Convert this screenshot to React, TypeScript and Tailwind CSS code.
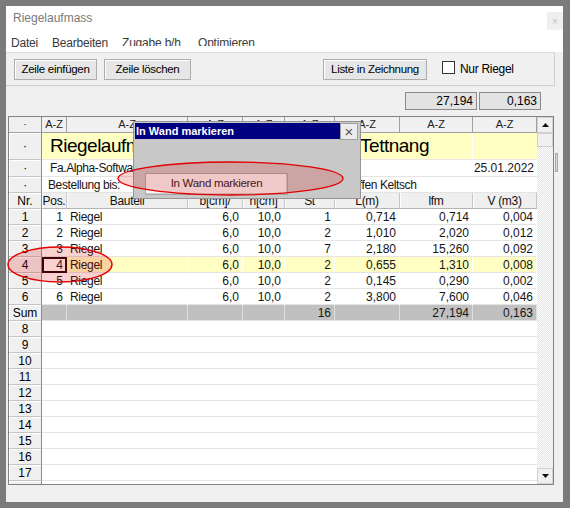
import React from "react";

type Row = {n: string; pos: string; bt: string; b: string; h: string; st: string; l: string; lfm: string; v: string};

const rows: Row[] = [
    {n: "1", pos: "1", bt: "Riegel", b: "6,0", h: "10,0", st: "1", l: "0,714", lfm: "0,714", v: "0,004"},
    {n: "2", pos: "2", bt: "Riegel", b: "6,0", h: "10,0", st: "2", l: "1,010", lfm: "2,020", v: "0,012"},
    {n: "3", pos: "3", bt: "Riegel", b: "6,0", h: "10,0", st: "7", l: "2,180", lfm: "15,260", v: "0,092"},
    {n: "4", pos: "4", bt: "Riegel", b: "6,0", h: "10,0", st: "2", l: "0,655", lfm: "1,310", v: "0,008"},
    {n: "5", pos: "5", bt: "Riegel", b: "6,0", h: "10,0", st: "2", l: "0,145", lfm: "0,290", v: "0,002"},
    {n: "6", pos: "6", bt: "Riegel", b: "6,0", h: "10,0", st: "2", l: "3,800", lfm: "7,600", v: "0,046"}
];

// the last one is only a sliver at the grid bottom, so it has no label
const emptyRows = ["8", "9", "10", "11", "12", "13", "14", "15", "16", "17", ""];

function RowHead({children}: {children?: React.ReactNode}) {
    return (
        <div className="w-[33px] shrink-0 h-full flex items-center justify-center bg-[#f0f0f0] border-r border-r-[#8a8a8a] border-b border-b-[#c4c4c4] shadow-[inset_1px_1px_0_#fff] text-[12px] text-black">
            {children}
        </div>
    );
}

function AzCell({className, children}: {className: string; children?: React.ReactNode}) {
    return (
        <div className={`${className} shrink-0 h-full flex items-center justify-center bg-[#f0f0f0] border-r border-r-[#a0a0a0] border-b border-b-[#a0a0a0] text-[11px] text-[#222]`}>
            {children}
        </div>
    );
}

function HeadCell({className, children}: {className: string; children?: React.ReactNode}) {
    return (
        <div className={`${className} shrink-0 h-full flex items-center justify-center bg-[#efefef] border-r border-r-[#c6c6c6] border-b border-b-[#b4b4b4] shadow-[inset_1px_0_0_#fff] text-[12px] tracking-[-0.3px] text-[#111]`}>
            {children}
        </div>
    );
}

function DataRow({r, sel}: {r: Row; sel?: boolean}) {
    const bg = sel ? "bg-[#ffffc4]" : "bg-white";
    const c = `shrink-0 h-full flex items-center justify-end pr-[3px] border-r border-r-white border-b border-b-[#e4e4e4] ${bg}`;
    return (
        <div className="flex h-[16px] text-[12px] text-[#151515]">
            <RowHead>{r.n}</RowHead>
            {sel ? (
                <div className="w-[25px] shrink-0 h-full flex items-center justify-end pr-[2px] bg-white border-2 border-[#1e0505]">
                    {r.pos}
                </div>
            ) : (
                <div className={`w-[25px] ${c}`}>{r.pos}</div>
            )}
            <div className={`w-[121px] ${c} !justify-start pl-[3px] tracking-[-0.3px]`}>{r.bt}</div>
            <div className={`w-[55px] ${c}`}>{r.b}</div>
            <div className={`w-[42px] ${c}`}>{r.h}</div>
            <div className={`w-[50px] ${c}`}>{r.st}</div>
            <div className={`w-[65px] ${c}`}>{r.l}</div>
            <div className={`w-[73px] ${c}`}>{r.lfm}</div>
            <div className={`w-[64px] ${c}`}>{r.v}</div>
        </div>
    );
}

function Arrow({down}: {down?: boolean}) {
    return (
        <div className="h-[16px] shrink-0 flex items-center justify-center bg-[#f0f0f0] border border-[#d2d2d2]">
            <svg width="7" height="4" viewBox="0 0 7 4" aria-hidden="true">
                <path d={down ? "M0 0H7L3.5 4Z" : "M0 4H7L3.5 0Z"} fill="#111" />
            </svg>
        </div>
    );
}

export default function App() {
    const sumCell = "shrink-0 h-full flex items-center justify-end pr-[3px] bg-[#c0c0c0] border-r border-r-[#dedede] border-b border-b-[#e4e4e4]";
    return (
        <div className="relative w-[570px] h-[508px] bg-[#7b7b7b] p-[6px] pr-[7px] overflow-hidden font-['Liberation_Sans',Arial,sans-serif]">
            <div className="w-[557px] h-[496px] bg-[#f0f0f0] flex flex-col">
                {/* title bar */}
                <div className="h-[24px] shrink-0 bg-white flex justify-between">
                    <div className="pl-[7px] pt-[5px] leading-[14px] text-[12px] text-[#7a7a7a]">Riegelaufmass</div>
                    <div className="mt-[6px] w-[16px] h-[18px] bg-[#efefef] flex items-center justify-center text-[10px] text-[#c4c4c4]">×</div>
                </div>

                {/* menu */}
                <div className="h-[22px] shrink-0 bg-white flex pl-[5px] pt-[6px] leading-[14px] text-[12px] tracking-[-0.2px] text-[#3a3a3a]">
                    <span className="w-[41px]">Datei</span>
                    <span className="w-[70px]">Bearbeiten</span>
                    <span className="w-[76px] h-[10px] overflow-hidden">Zugabe b/h</span>
                    <span className="h-[10px] overflow-hidden">Optimieren</span>
                </div>

                {/* toolbar */}
                <div className="w-[549px] h-[34px] shrink-0 border-t border-t-[#dadada] border-b border-b-[#cfcfcf] border-r border-r-[#cfcfcf] flex items-start pt-[6px] pl-[8px] text-[11.5px] tracking-[-0.3px] text-black">
                    <button className="w-[83px] h-[21px] bg-[#e6e6e6] border border-[#adadad] shadow-[inset_1px_1px_0_#fff]">Zeile einfügen</button>
                    <button className="ml-[7px] w-[87px] h-[21px] bg-[#e6e6e6] border border-[#adadad] shadow-[inset_1px_1px_0_#fff]">Zeile löschen</button>
                    <button className="ml-[132px] w-[104px] h-[21px] bg-[#e6e6e6] border border-[#adadad] shadow-[inset_1px_1px_0_#fff]">Liste in  Zeichnung</button>
                    <div className="ml-[15px] mt-[2px] w-[13px] h-[13px] bg-white border border-[#333]" />
                    <span className="ml-[5px] mt-[1px] text-[12px]">Nur Riegel</span>
                </div>

                {/* totals */}
                <div className="mt-[6px] h-[18px] shrink-0 flex justify-end gap-[2px] pr-[22px] text-[12px] text-black">
                    <div className="w-[72px] h-full flex items-center justify-end pr-[3px] bg-[#e3e3e3] border border-[#8a8a8a]">27,194</div>
                    <div className="w-[62px] h-full flex items-center justify-end pr-[3px] bg-[#e3e3e3] border border-[#8a8a8a]">0,163</div>
                </div>

                {/* grid */}
                <div className="mt-[6px] ml-[2px] flex items-start">
                    <div className="w-[546px] h-[369px] shrink-0 flex bg-white border border-[#828282] overflow-hidden">
                        <div className="w-[528px] shrink-0 flex flex-col">
                            <div className="flex h-[16px] shrink-0">
                                <AzCell className="w-[33px] !border-r-[#8a8a8a]">·</AzCell>
                                <AzCell className="w-[25px]">A-Z</AzCell>
                                <AzCell className="w-[121px]">A-Z</AzCell>
                                <AzCell className="w-[55px]">A-Z</AzCell>
                                <AzCell className="w-[42px]">A-Z</AzCell>
                                <AzCell className="w-[50px]">A-Z</AzCell>
                                <AzCell className="w-[65px]">A-Z</AzCell>
                                <AzCell className="w-[73px]">A-Z</AzCell>
                                <AzCell className="w-[64px]">A-Z</AzCell>
                            </div>

                            <div className="flex h-[27px] shrink-0">
                                <RowHead>·</RowHead>
                                <div className="w-[431px] shrink-0 h-full flex items-center pl-[8px] pr-[43px] bg-[#ffffc4] border-r border-r-white border-b border-b-[#e8e8e8] text-[19px] tracking-[-0.5px] text-black">
                                    <span>Riegelaufmass</span>
                                    <span className="ml-auto">Tettnang</span>
                                </div>
                                <div className="w-[64px] shrink-0 h-full bg-[#ffffc4] border-b border-b-[#e8e8e8]" />
                            </div>

                            <div className="flex h-[17px] shrink-0 text-[12px] tracking-[-0.4px] text-[#151515]">
                                <RowHead>·</RowHead>
                                <div className="w-[431px] shrink-0 h-full flex items-center pl-[8px] bg-white border-b border-b-[#e4e4e4]">Fa.Alpha-Software GmbH</div>
                                <div className="w-[64px] shrink-0 h-full flex items-center justify-end pr-[3px] bg-white border-b border-b-[#e4e4e4] tracking-normal">25.01.2022</div>
                            </div>

                            <div className="flex h-[16px] shrink-0 text-[12px] tracking-[-0.4px] text-[#151515]">
                                <RowHead>·</RowHead>
                                <div className="w-[293px] shrink-0 h-full flex items-center pl-[6px] bg-white border-b border-b-[#e4e4e4]">Bestellung bis:</div>
                                <div className="w-[202px] shrink-0 h-full flex items-center pl-[7px] bg-white border-b border-b-[#e4e4e4]">Steffen Keltsch</div>
                            </div>

                            <div className="flex h-[16px] shrink-0">
                                <RowHead>Nr.</RowHead>
                                <HeadCell className="w-[25px]">Pos.</HeadCell>
                                <HeadCell className="w-[121px]">Bauteil</HeadCell>
                                <HeadCell className="w-[55px]">b[cm]/</HeadCell>
                                <HeadCell className="w-[42px]">h[cm]</HeadCell>
                                <HeadCell className="w-[50px]">St</HeadCell>
                                <HeadCell className="w-[65px]">L(m)</HeadCell>
                                <HeadCell className="w-[73px]">lfm</HeadCell>
                                <HeadCell className="w-[64px]">V (m3)</HeadCell>
                            </div>

                            {rows.map(r => (
                                <DataRow key={r.n} r={r} sel={r.n === "4"} />
                            ))}

                            <div className="flex h-[16px] shrink-0 text-[12px] text-[#151515]">
                                <RowHead>Sum</RowHead>
                                <div className={`w-[25px] ${sumCell}`} />
                                <div className={`w-[121px] ${sumCell}`} />
                                <div className={`w-[55px] ${sumCell}`} />
                                <div className={`w-[42px] ${sumCell}`} />
                                <div className={`w-[50px] ${sumCell}`}>16</div>
                                <div className={`w-[65px] ${sumCell}`} />
                                <div className={`w-[73px] ${sumCell}`}>27,194</div>
                                <div className={`w-[64px] ${sumCell}`}>0,163</div>
                            </div>

                            {emptyRows.map((n, i) => (
                                <div key={i} className="flex h-[16px] shrink-0">
                                    <RowHead>{n}</RowHead>
                                    <div className="w-[495px] shrink-0 h-full bg-white border-b border-b-[#e4e4e4]" />
                                </div>
                            ))}
                        </div>

                        <div className="w-[16px] shrink-0 h-full flex flex-col bg-[repeating-conic-gradient(#e6e6e6_0_25%,#fbfbfb_0_50%)] bg-[length:2px_2px]">
                            <Arrow />
                            <div className="h-[14px] shrink-0 bg-[#f0f0f0] border border-[#cfcfcf]" />
                            <div className="flex-1" />
                            <Arrow down />
                        </div>
                    </div>
                    <div className="ml-[1px] mt-[37px] w-[3px] h-[19px] bg-[#d8d8d8] border border-[#a8a8a8]" />
                </div>
            </div>

            {/* dialog */}
            <div className="absolute left-[133px] top-[121px] w-[228px] h-[78px] flex flex-col bg-[#c8c8c8] border border-[#959595] p-[1px] pr-[2px]">
                <div className="flex h-[17px] shrink-0">
                    <div className="flex-1 h-[16px] flex items-center pl-[1px] bg-[#000080] text-white font-bold text-[11px]">In Wand markieren</div>
                    <div className="w-[18px] h-[17px] flex items-center justify-center bg-[#ececec] border border-[#a0a0a0] text-[15px] leading-none text-[#555]">×</div>
                </div>
                <div className="pt-[30px] pl-[10px]">
                    <button className="w-[143px] h-[22px] bg-[#f4f4f4] border border-[#a8a8a8] shadow-[inset_-1px_-1px_0_#d0d0d0] text-[11.5px] tracking-[-0.3px] text-[#222]">
                        In Wand markieren
                    </button>
                </div>
            </div>

            {/* red markup */}
            <svg className="absolute inset-0 pointer-events-none" width="570" height="508" viewBox="0 0 570 508" aria-hidden="true">
                <ellipse cx="230.5" cy="178.5" rx="112.5" ry="16.5" fill="rgba(229,0,0,0.18)" stroke="#e00000" strokeWidth="1.4" />
                <ellipse cx="60" cy="264.5" rx="52" ry="17.5" fill="rgba(229,0,0,0.18)" stroke="#e00000" strokeWidth="1.4" />
            </svg>
        </div>
    );
}
